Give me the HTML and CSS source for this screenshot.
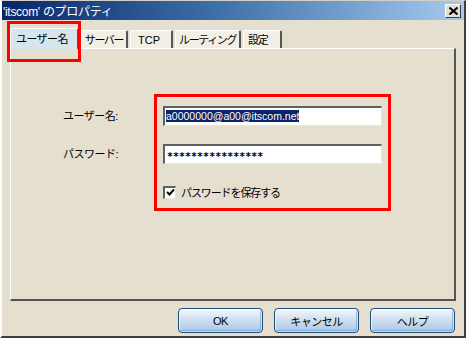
FILE: index.html
```html
<!DOCTYPE html>
<html lang="ja">
<head>
<meta charset="UTF-8">
<title>'itscom' のプロパティ</title>
<link rel="stylesheet" href="styles.css">
</head>
<body>
<div class="window">
  <div class="titlebar">
    <span class="title">'itscom' のプロパティ</span>
    <span class="close">
      <svg width="9" height="8" viewBox="0 0 9 8"><path d="M0.5 0.5 L8.5 7.5 M8.5 0.5 L0.5 7.5" stroke="#000" stroke-width="2"/></svg>
    </span>
  </div>

  <div class="tabs">
    <div class="tab active">ユーザー名</div>
    <div class="tab">サーバー</div>
    <div class="tab tcp">TCP</div>
    <div class="tab">ルーティング</div>
    <div class="tab last">設定</div>
  </div>

  <div class="panel">
    <div class="form">
      <label class="lbl">ユーザー名:</label>
      <div class="field"><span class="sel">a0000000@a00@itscom.net</span></div>
      <label class="lbl">パスワード:</label>
      <div class="field pw">****************</div>
      <div class="check-row">
        <span class="checkbox">
          <svg width="9" height="9" viewBox="0 0 9 9"><path d="M1 4 L3.5 6.5 L8 1.5" fill="none" stroke="#000" stroke-width="2"/></svg>
        </span>
        <span>パスワードを保存する</span>
      </div>
    </div>
    <div class="mark mark-form"></div>
  </div>

  <div class="buttons">
    <button class="btn">OK</button>
    <button class="btn">キャンセル</button>
    <button class="btn">ヘルプ</button>
  </div>

  <div class="mark mark-tab"></div>
</div>
</body>
</html>
```

FILE: styles.css
```css
body {
  margin: 0;
  font-family: "Liberation Sans", "Noto Sans CJK JP", sans-serif;
  font-size: 11px;
  color: #000;
}
.window {
  position: relative;
  width: 466px;
  height: 338px;
  box-sizing: border-box;
  background: #e4dfce;
  border-top: 1px solid #d4d0c8;
  border-left: 2px solid #fff;
  border-right: 2px solid #404040;
  border-bottom: 2px solid #404040;
  display: flex;
  flex-direction: column;
}
.titlebar {
  height: 19px;
  display: flex;
  align-items: center;
  justify-content: space-between;
  padding: 0 3px 0 1px;
  background: linear-gradient(to right, #0a246a, #3a6ea5 45%, #a6caf0);
  color: #fff;
}
.title {
  font-size: 12px;
  letter-spacing: -0.3px;
}
.close {
  width: 14px;
  height: 12px;
  background: #e4dfce;
  border: 1px solid;
  border-color: #fff #404040 #404040 #fff;
  display: flex;
  align-items: center;
  justify-content: center;
}

/* tabs */
.tabs {
  display: flex;
  align-items: flex-end;
  height: 20px;
  margin: 8px 0 0 8px;
  position: relative;
  z-index: 1;
}
.tab {
  height: 18px;
  box-sizing: border-box;
  padding: 2px 3px 0 3px;
  margin-right: 2px;
  background: #f1efe6;
  border-top: 1px solid #fff;
  border-left: 1px solid #fff;
  border-right: 2px solid #555;
  border-radius: 2px 2px 0 0;
  font-size: 11px;
  letter-spacing: -1.4px;
  line-height: 15px;
  white-space: nowrap;
}
.tab.tcp {
  padding: 2px 11px 0 7px;
  letter-spacing: 0;
}
.tab.last {
  padding: 2px 13px 0 4px;
}
.tab.active {
  height: 21px;
  margin-bottom: -1px;
  padding: 3px 9px 0 5px;
  background: #d6e5ee;
  letter-spacing: -0.6px;
}

/* panel */
.panel {
  position: relative;
  width: 446px;
  height: 253px;
  box-sizing: border-box;
  margin-left: 8px;
  border-top: 1px solid #fff;
  border-left: 1px solid #fff;
  border-right: 2px solid #555;
  border-bottom: 2px solid #555;
}
.form {
  display: grid;
  grid-template-columns: 100px 219px;
  grid-auto-rows: 20px;
  row-gap: 18px;
  padding: 57px 0 0 52px;
}
.lbl {
  line-height: 20px;
  letter-spacing: -0.5px;
}
.field {
  box-sizing: border-box;
  background: #fff;
  border-top: 2px solid #606060;
  border-left: 2px solid #606060;
  border-right: 1px solid #e8e6dc;
  border-bottom: 1px solid #e8e6dc;
  padding: 1px 1px;
  line-height: 15px;
  font-size: 10.5px;
  white-space: nowrap;
}
.sel {
  background: #0a246a;
  color: #fff;
}
.pw {
  font-family: "DejaVu Sans Mono", monospace;
  font-weight: bold;
  font-size: 10px;
  padding-left: 2px;
  line-height: 20px;
}
.check-row {
  grid-column: 2;
  display: flex;
  align-items: center;
  gap: 5px;
  letter-spacing: -1.1px;
}
.checkbox {
  width: 13px;
  height: 13px;
  box-sizing: border-box;
  background: #fff;
  border-top: 2px solid #606060;
  border-left: 2px solid #606060;
  border-right: 1px solid #e8e6dc;
  border-bottom: 1px solid #e8e6dc;
  display: flex;
  align-items: center;
  justify-content: center;
}

/* buttons */
.buttons {
  display: flex;
  justify-content: flex-end;
  gap: 11px;
  margin: 7px 9px 0 0;
}
.btn {
  width: 85px;
  height: 25px;
  padding: 0;
  font-family: inherit;
  font-size: 11px;
  letter-spacing: -0.5px;
  color: #000;
  border: 1px solid #1f4e79;
  border-radius: 4px;
  background: linear-gradient(#f4f8fc, #cfe0f0 45%, #a9c6e4);
  box-shadow: inset 0 0 0 1px rgba(255, 255, 255, 0.6), inset -2px -2px 0 rgba(90, 140, 200, 0.5);
}

/* red annotation boxes */
.mark {
  position: absolute;
  border: 3px solid #f00;
  box-sizing: border-box;
  z-index: 2;
}
.mark-tab {
  left: 5px;
  top: 20px;
  width: 74px;
  height: 41px;
}
.mark-form {
  left: 143px;
  top: 45px;
  width: 237px;
  height: 117px;
}
```
